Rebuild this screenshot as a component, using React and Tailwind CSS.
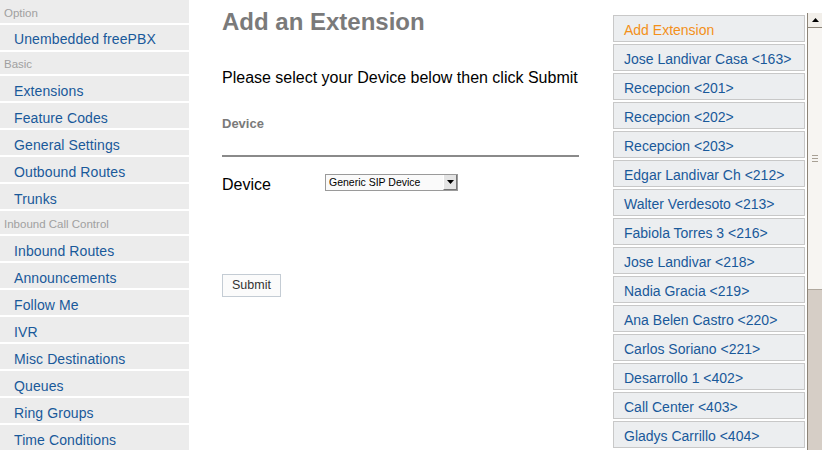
import React from 'react';

const nav = [
  { type: 'h', label: 'Option' },
  { label: 'Unembedded freePBX' },
  { type: 'h', label: 'Basic' },
  { label: 'Extensions' },
  { label: 'Feature Codes' },
  { label: 'General Settings' },
  { label: 'Outbound Routes' },
  { label: 'Trunks' },
  { type: 'h', label: 'Inbound Call Control' },
  { label: 'Inbound Routes' },
  { label: 'Announcements' },
  { label: 'Follow Me' },
  { label: 'IVR' },
  { label: 'Misc Destinations' },
  { label: 'Queues' },
  { label: 'Ring Groups' },
  { label: 'Time Conditions' },
];

const extensions = [
  'Jose Landivar Casa <163>',
  'Recepcion <201>',
  'Recepcion <202>',
  'Recepcion <203>',
  'Edgar Landivar Ch <212>',
  'Walter Verdesoto <213>',
  'Fabiola Torres 3 <216>',
  'Jose Landivar <218>',
  'Nadia Gracia <219>',
  'Ana Belen Castro <220>',
  'Carlos Soriano <221>',
  'Desarrollo 1 <402>',
  'Call Center <403>',
  'Gladys Carrillo <404>',
];

const Sidebar = () => (
  <div className="w-[189px] shrink-0 flex flex-col gap-[2px]">
    {nav.map((n, i) =>
      n.type === 'h' ? (
        <div key={i} className="h-[23px] bg-[#ececec] pl-[4px] pt-[4px] flex items-center text-[11.5px] text-[#a0a0a0]">
          {n.label}
        </div>
      ) : (
        <div key={i} className="h-[25px] bg-[#ececec] pl-[14px] pt-[5px] flex items-center text-[14px] tracking-[0.1px] text-[#19599a]">
          {n.label}
        </div>
      )
    )}
  </div>
);

const Main = () => (
  <div className="w-[357px] shrink-0 ml-[33px] pt-[8px]">
    <h1 className="text-[24px] font-bold text-[#7a7a7a] leading-[28px]">Add an Extension</h1>
    <p className="mt-[32px] text-[16px] text-black leading-[20px] whitespace-nowrap">Please select your Device below then click Submit</p>
    <div className="mt-[28px] pb-[23px] border-b-2 border-[#8a8a8a] text-[13px] font-bold text-[#7a7a7a] leading-[16px]">Device</div>
    <div className="mt-[18px] flex items-start">
      <span className="w-[103px] text-[16px] text-black leading-[20px]">Device</span>
      <div className="w-[133px] h-[17px] -mt-px border border-[#9a9a9a] bg-[#fafafa] flex items-center justify-between">
        <span className="pl-[3px] text-[10.5px] text-black leading-none">Generic SIP Device</span>
        <span className="w-[14px] h-[15px] bg-[#e4e4e4] border-l border-[#fff] border-r border-b border-r-[#777] border-b-[#777] flex items-center justify-center">
          <svg width="7" height="4" viewBox="0 0 7 4"><path d="M0 0h7L3.5 4z" fill="#000" /></svg>
        </span>
      </div>
    </div>
    <button className="mt-[79px] h-[23px] px-[9px] border border-[#c4ccd4] bg-[#fbfbfb] text-[12.5px] text-[#333]">Submit</button>
  </div>
);

const RightPanel = () => (
  <div className="ml-[34px] pt-[13px] flex">
    <div className="w-[192px] pt-[2px] flex flex-col gap-[2px]">
      <div className="h-[27px] border border-[#c8c8c8] bg-[#eceef0] pl-[10px] pt-[3px] flex items-center text-[14px] text-[#f39019]">Add Extension</div>
      {extensions.map((e) => (
        <div key={e} className="h-[27px] border border-[#c8c8c8] bg-[#eceef0] pl-[10px] pt-[3px] flex items-center text-[14px] text-[#19599a] whitespace-nowrap">
          {e}
        </div>
      ))}
    </div>
    <div className="ml-[2px] w-[15px] h-[437px] border-l border-[#8c8478] bg-[#d6cec6] flex flex-col">
      <div className="h-[15px] bg-[#f2efea] border-b border-[#8c8478] flex items-center justify-center">
        <svg width="7" height="4" viewBox="0 0 7 4"><path d="M0 4h7L3.5 0z" fill="#000" /></svg>
      </div>
      <div className="h-[262px] bg-[#f7f5f2] border-b border-[#b0a89e] flex flex-col items-center justify-center gap-[2px]">
        <div className="w-[6px] h-px bg-[#a8a095]" />
        <div className="w-[6px] h-px bg-[#a8a095]" />
        <div className="w-[6px] h-px bg-[#a8a095]" />
      </div>
    </div>
  </div>
);

export default function App() {
  return (
    <div className="w-[822px] h-[450px] overflow-hidden bg-white flex" style={{ fontFamily: '"Liberation Sans", Arial, sans-serif' }}>
      <Sidebar />
      <Main />
      <RightPanel />
    </div>
  );
}
